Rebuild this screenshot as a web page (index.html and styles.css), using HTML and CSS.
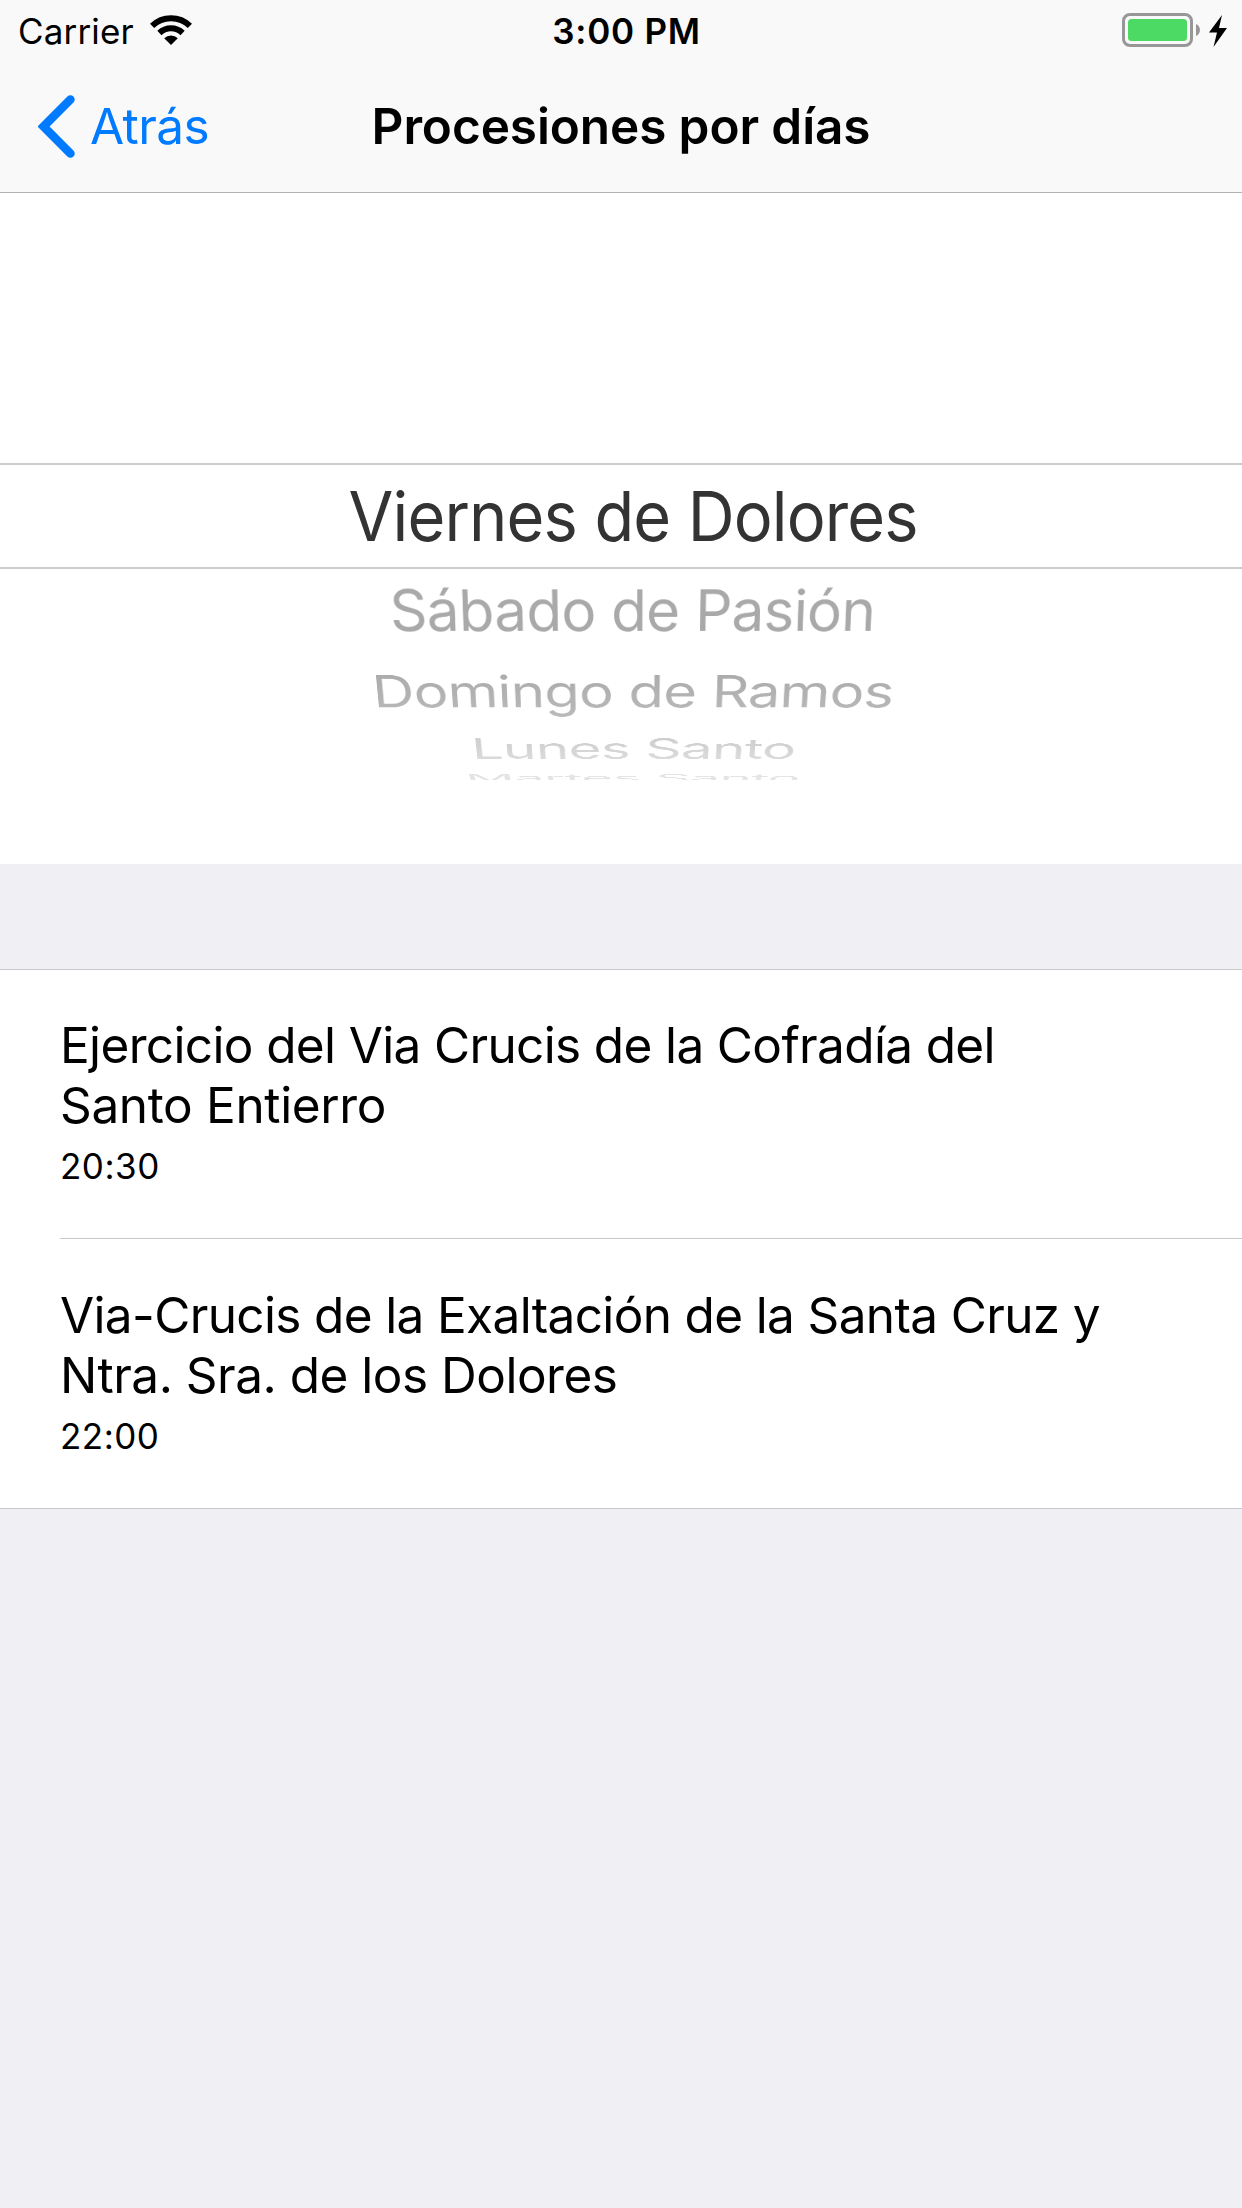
FILE: index.html
```html
<!DOCTYPE html>
<html lang="es">
<head>
<meta charset="utf-8">
<title>Procesiones por días</title>
<link rel="stylesheet" href="styles.css">
</head>
<body>
<header class="top">
  <div class="status">
    <div class="status-left">
      <span class="carrier">Carrier</span>
      <svg class="wifi" width="42" height="30" viewBox="0 0 42 30">
        <path fill="#000" d="M21 30 L14.2 23.2 A9.6 9.6 0 0 1 27.8 23.2 Z"/>
        <path fill="none" stroke="#000" stroke-width="6" d="M9.400 18 A16.7 16.7 0 0 1 32.600 18"/>
        <path fill="none" stroke="#000" stroke-width="6" d="M2.100 10.800 A27.2 27.2 0 0 1 39.900 10.800"/>
      </svg>
    </div>
    <span class="clock">3:00 PM</span>
    <div class="status-right">
      <svg class="battery" width="78" height="34" viewBox="0 0 78 34">
        <rect x="1.5" y="1.5" width="68" height="31" rx="6.5" fill="none" stroke="#979797" stroke-width="3"/>
        <rect x="6" y="6" width="59" height="22" rx="3.5" fill="#4cd964"/>
        <path fill="#979797" d="M74 11 C79.300 13 79.300 21 74 23 Z"/>
      </svg>
      <svg class="bolt" width="18" height="32" viewBox="0 0 18 32">
        <path fill="#000" d="M13 0 L0 17.500 H8 L4.500 32 L18 13 H10 Z"/>
      </svg>
    </div>
  </div>
  <nav class="nav">
    <a class="back">
      <svg width="37" height="63" viewBox="0 0 37 63"><path fill="none" stroke="#007aff" stroke-width="8.600" stroke-linecap="round" d="M32.400 4.500 L5.500 31.500 L32.400 58.500"/></svg>
      <span class="back-label">Atrás</span>
    </a>
    <h1 class="title">Procesiones por días</h1>
  </nav>
</header>
<section class="picker">
  <div class="row r0"><span>Viernes de Dolores</span></div>
  <div class="row r1"><span>Sábado de Pasión</span></div>
  <div class="row r2"><span>Domingo de Ramos</span></div>
  <div class="row r3"><span>Lunes Santo</span></div>
  <div class="row r4"><span>Martes Santo</span></div>
</section>
<main class="list">
  <article class="cell">
    <h2 class="name"><span class="a1">Ejercicio del Via Crucis de la Cofradía del</span><br><span class="a2">Santo Entierro</span></h2>
    <p class="time">20:30</p>
  </article>
  <article class="cell">
    <h2 class="name"><span class="b1">Via-Crucis de la Exaltación de la Santa Cruz y</span><br><span class="b2">Ntra. Sra. de los Dolores</span></h2>
    <p class="time">22:00</p>
  </article>
</main>
</body>
</html>
```
FILE: styles.css
```css
* { box-sizing: border-box; margin: 0; padding: 0; }
body {
  width: 1242px;
  min-height: 2208px;
  background: #efeff4;
  color: #000;
  font-family: Inter, "Liberation Sans", sans-serif;
  font-weight: 400;
}
.top { height: 193px; background: #f9f9f9; border-bottom: 1px solid #b2b2b2; }
.status {
  display: grid;
  grid-template-columns: 1fr auto 1fr;
  height: 60px;
  padding: 0 15px 0 18px;
  font-size: 35px;
  line-height: 62px;
}
.status-left, .status-right { display: flex; align-items: flex-start; }
.status-right { justify-content: flex-end; }
.carrier { letter-spacing: 0.15px; }
.wifi { margin: 15px 0 0 16px; }
.clock { font-weight: 560; letter-spacing: 0.75px; padding-left: 8px; }
.battery { margin-top: 13px; }
.bolt { margin: 15px 0 0 9px; }
.nav { display: grid; grid-template-columns: 1fr auto 1fr; height: 132px; line-height: 132px; }
.back { display: flex; align-items: center; padding-left: 38px; color: #007aff; font-size: 49.500px; letter-spacing: -0.6px; }
.back-label { margin-left: 15px; }
.title { font-size: 49.500px; font-weight: 600; letter-spacing: -0.1px; }
.picker {
  height: 671px;
  padding-top: 270px;
  background: #fff;
}
.row {
  padding-left: 24px;
  font-size: 68.500px;
  letter-spacing: -0.9px;
  text-align: center;
  color: #a9a9a9;
  white-space: nowrap;
  overflow: hidden;
}
.row span { display: inline-block; }
.r0 { height: 106px; line-height: 104px; border-top: 2px solid #ccc; border-bottom: 2px solid #ccc; color: #333; }
.r0 span { transform: scaleX(0.948); }
.r1 { height: 82px; line-height: 84px; }
.r1 span { transform: perspective(3200px) rotateX(-34deg) scaleX(0.853); }
.r2 { height: 78px; line-height: 82px; -webkit-mask-image: linear-gradient(#000 20%, rgba(0, 0, 0, 0.76)); mask-image: linear-gradient(#000 20%, rgba(0, 0, 0, 0.76)); }
.r2 span { transform: perspective(3200px) rotateX(-50deg) scaleX(0.846); }
.r3 { height: 36px; line-height: 40px; -webkit-mask-image: linear-gradient(rgba(0, 0, 0, 0.64), rgba(0, 0, 0, 0.38)); mask-image: linear-gradient(rgba(0, 0, 0, 0.64), rgba(0, 0, 0, 0.38)); }
.r3 span { transform: perspective(3200px) rotateX(-66deg) scaleX(0.829); }
.r4 { height: 15px; line-height: 26px; opacity: 0.32; }
.r4 span { transform: perspective(3200px) rotateX(-81deg) scaleX(0.798); }
.list {
  margin-top: 105px;
  border-top: 1px solid #c8c7cc;
  border-bottom: 1px solid #c8c7cc;
  background: #fff;
}
.cell { height: 268px; margin-left: 60px; padding-top: 45px; }
.cell + .cell { height: 270px; padding-top: 46px; border-top: 1px solid #c8c7cc; }
.name { font-size: 49.500px; font-weight: 400; line-height: 60px; white-space: nowrap; }
.a1, .b1 { letter-spacing: -0.64px; }
.a2 { letter-spacing: -0.35px; }
.b2 { letter-spacing: -0.5px; }
.time { font-size: 35px; line-height: 62px; letter-spacing: 0.5px; }
```
